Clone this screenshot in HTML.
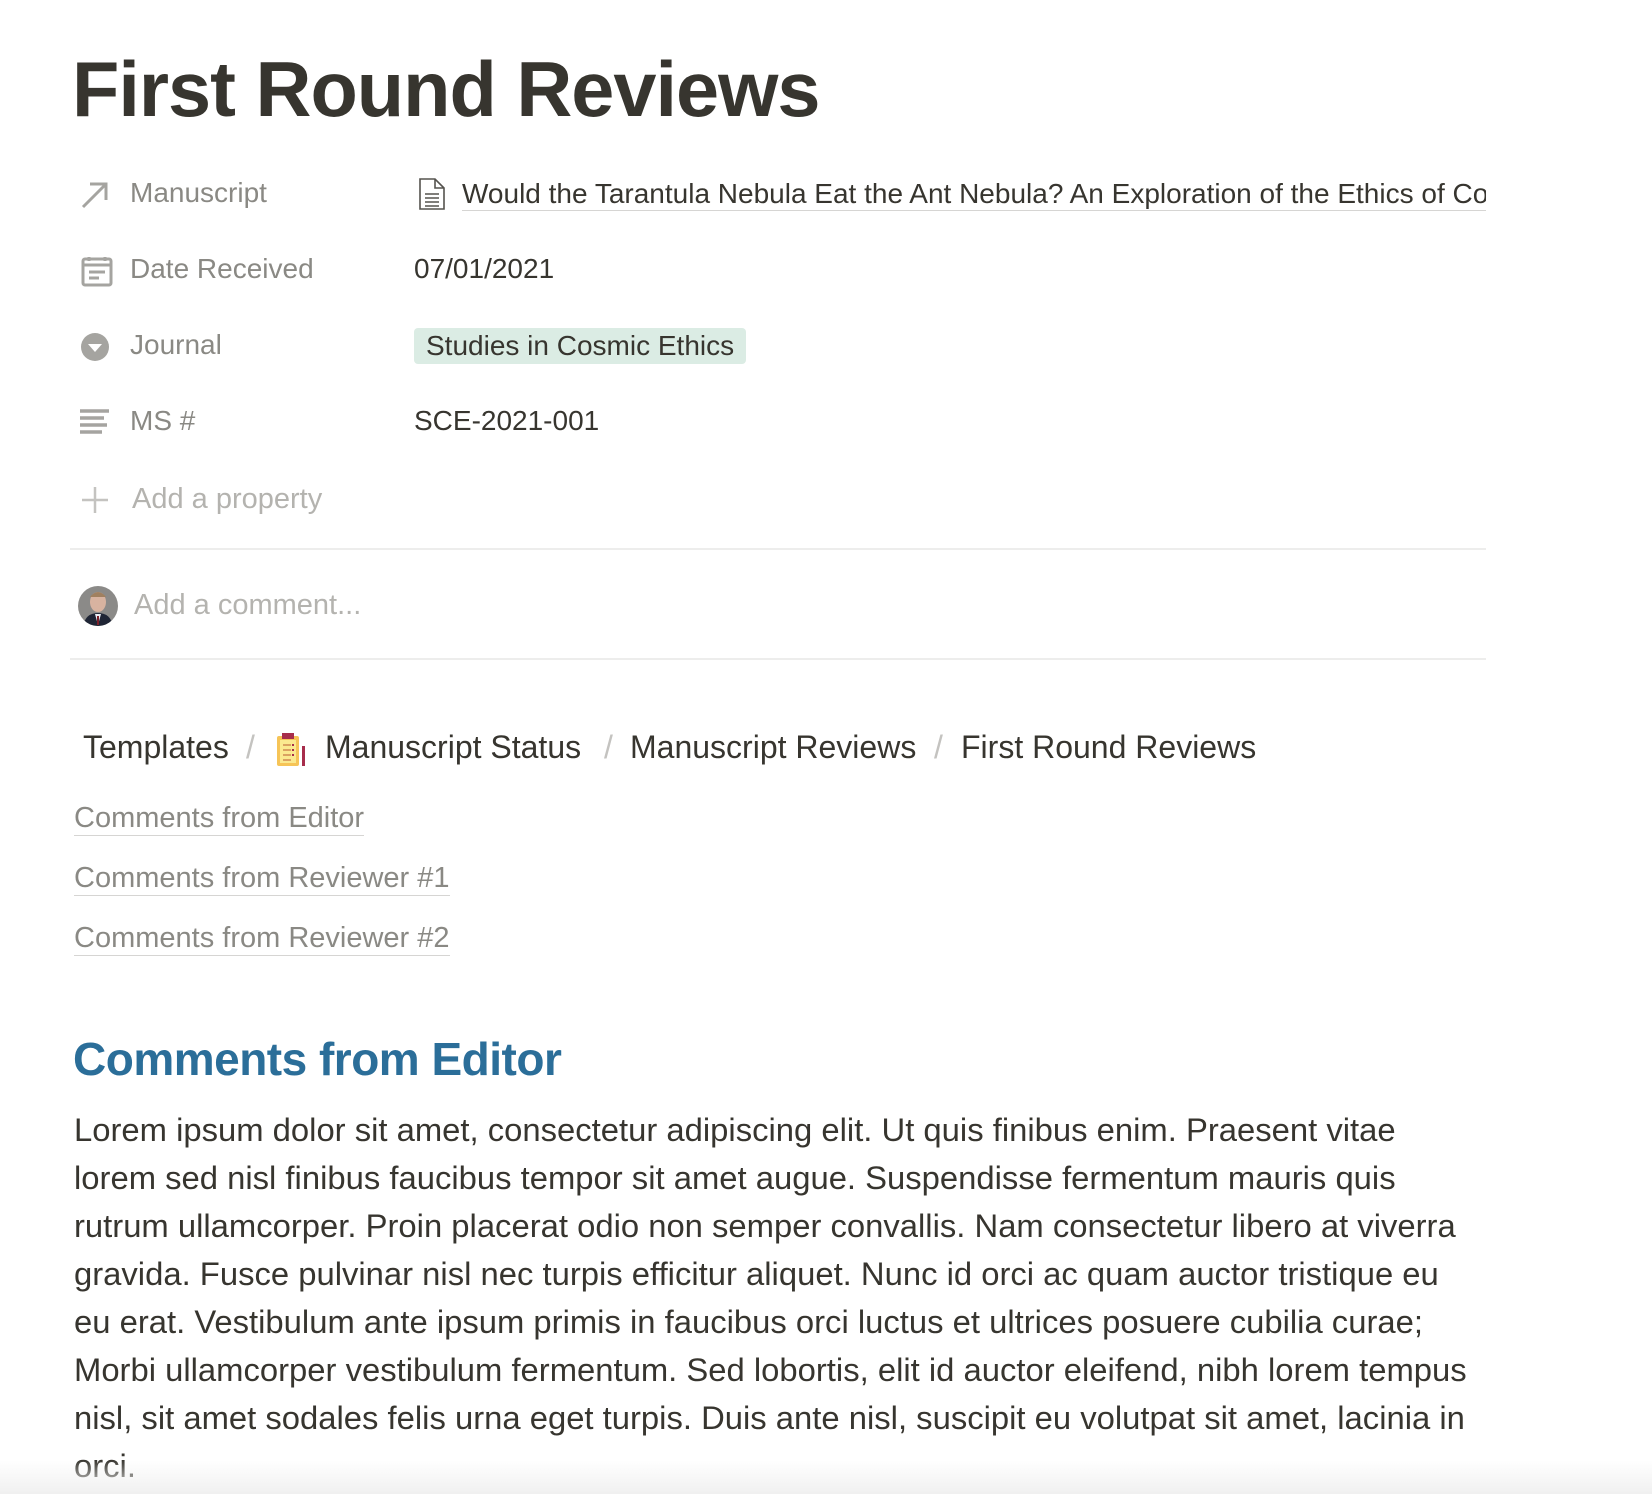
<!DOCTYPE html>
<html><head><meta charset="utf-8"><style>
body{margin:0;width:1652px;height:1494px;background:#fff;position:relative;overflow:hidden;font-family:"Liberation Sans",sans-serif;color:#37352f}
.a{position:absolute;white-space:nowrap}
.lbl{color:#8a8984;font-size:28px;left:130px}
.val{left:414px;font-size:28px;color:#37352f}
.ic{position:absolute;left:80px}
.lnk{left:74px;font-size:29px;color:#8a8984;border-bottom:1px solid #d6d5d3;line-height:34px}
.p{left:74px;font-size:32.8px;line-height:48px}
.bc{font-size:32px;top:729px;color:#37352f}
.sl{color:#c4c3c0}
</style></head><body>
<div class="a" style="left:72px;top:46px;font-size:77.5px;font-weight:bold;letter-spacing:-1px;color:#37352f">First Round Reviews</div>

<svg class="ic" style="top:180px" width="30" height="30" viewBox="0 0 30 30"><path d="M3 27L25 5M10 4H26V20" stroke="#a5a4a0" stroke-width="3" fill="none"/></svg>
<div class="a lbl" style="top:177px">Manuscript</div>
<svg class="a" style="left:418px;top:177px" width="28" height="34" viewBox="0 0 28 34"><path d="M2 2H17L26 11V32H2Z M17 2V11H26 M7 17H21M7 21H21M7 25H21M7 29H21" stroke="#55534e" stroke-width="1.6" fill="none"/></svg>
<div class="a" style="left:462px;top:177px;font-size:28px;color:#37352f;width:1024px;overflow:hidden;border-bottom:1px solid #d6d5d3;line-height:33px;font-weight:500">Would the Tarantula Nebula Eat the Ant Nebula? An Exploration of the Ethics of Cosmic Consumption</div>

<svg class="ic" style="top:254px" width="34" height="34" viewBox="0 0 34 34"><rect x="3" y="5" width="28" height="26" rx="2" stroke="#a5a4a0" stroke-width="3" fill="none"/><path d="M3 11H31M9 3V7M25 3V7M9 18H25M9 24H19" stroke="#a5a4a0" stroke-width="3"/></svg>
<div class="a lbl" style="top:253px">Date Received</div>
<div class="a val" style="top:253px">07/01/2021</div>

<svg class="ic" style="top:332px" width="30" height="30" viewBox="0 0 30 30"><circle cx="15" cy="15" r="14" fill="#a5a4a0"/><path d="M8 12H22L15 20Z" fill="#fff"/></svg>
<div class="a lbl" style="top:329px">Journal</div>
<div class="a" style="left:414px;top:328px;height:36px;padding:0 12px;background:#dbece4;border-radius:4px;font-size:28px;line-height:36px;color:#37352f">Studies in Cosmic Ethics</div>

<svg class="ic" style="top:408px" width="30" height="28" viewBox="0 0 30 28"><path d="M0 3H29M0 10H24M0 17H27M0 24H22" stroke="#a5a4a0" stroke-width="3.5"/></svg>
<div class="a lbl" style="top:405px">MS #</div>
<div class="a val" style="top:405px">SCE-2021-001</div>

<svg class="ic" style="top:485px" width="30" height="30" viewBox="0 0 30 30"><path d="M15 2V28M2 15H28" stroke="#c4c3c0" stroke-width="2.5"/></svg>
<div class="a" style="left:132px;top:483px;font-size:29px;color:#b4b3af">Add a property</div>

<div class="a" style="left:70px;top:548px;width:1416px;height:2px;background:#ededec"></div>
<svg class="a" style="left:77px;top:585px" width="42" height="42" viewBox="0 0 42 42"><defs><clipPath id="c"><circle cx="21" cy="21" r="20"/></clipPath></defs><g clip-path="url(#c)"><rect width="42" height="42" fill="#8b8a88"/><ellipse cx="21" cy="17" rx="8" ry="10" fill="#d8b3a0"/><path d="M13 12Q21 2 29 12" fill="#a08060"/><path d="M6 42Q8 28 21 28Q34 28 36 42Z" fill="#1f2535"/><path d="M18 29L21 40L24 29Z" fill="#e9eef5"/><path d="M20 31H22V40H20Z" fill="#7a1f2a"/></g></svg>
<div class="a" style="left:134px;top:589px;font-size:29px;color:#b4b3af">Add a comment...</div>
<div class="a" style="left:70px;top:658px;width:1416px;height:2px;background:#ededec"></div>

<div class="a bc" style="left:83px">Templates</div>
<div class="a bc sl" style="left:246px">/</div>
<svg class="a" style="left:276px;top:731px" width="32" height="36" viewBox="0 0 32 36"><rect x="1" y="5" width="22" height="30" rx="2" fill="#f6c457"/><rect x="4" y="9" width="16" height="23" fill="#fbe98f"/><rect x="6" y="2" width="12" height="6" fill="#a72d4b"/><path d="M7 14H15M7 19H15M7 24H15M7 29H15" stroke="#d08a52" stroke-width="1.5"/><rect x="16" y="13" width="2" height="2" fill="#a72d4b"/><rect x="16" y="18" width="2" height="2" fill="#a72d4b"/><rect x="16" y="23" width="2" height="2" fill="#a72d4b"/><rect x="26" y="15" width="3" height="20" fill="#a72d4b"/></svg>
<div class="a bc" style="left:325px">Manuscript Status</div>
<div class="a bc sl" style="left:604px">/</div>
<div class="a bc" style="left:630px">Manuscript Reviews</div>
<div class="a bc sl" style="left:934px">/</div>
<div class="a bc" style="left:961px">First Round Reviews</div>

<div class="a lnk" style="top:801px">Comments from Editor</div>
<div class="a lnk" style="top:861px">Comments from Reviewer #1</div>
<div class="a lnk" style="top:921px">Comments from Reviewer #2</div>

<div class="a" style="left:73px;top:1032px;font-size:46px;font-weight:bold;color:#2b6e99;letter-spacing:-0.5px">Comments from Editor</div>
<div class="a p" style="top:1106px">Lorem ipsum dolor sit amet, consectetur adipiscing elit. Ut quis finibus enim. Praesent vitae<br>lorem sed nisl finibus faucibus tempor sit amet augue. Suspendisse fermentum mauris quis<br>rutrum ullamcorper. Proin placerat odio non semper convallis. Nam consectetur libero at viverra<br>gravida. Fusce pulvinar nisl nec turpis efficitur aliquet. Nunc id orci ac quam auctor tristique eu<br>eu erat. Vestibulum ante ipsum primis in faucibus orci luctus et ultrices posuere cubilia curae;<br>Morbi ullamcorper vestibulum fermentum. Sed lobortis, elit id auctor eleifend, nibh lorem tempus<br>nisl, sit amet sodales felis urna eget turpis. Duis ante nisl, suscipit eu volutpat sit amet, lacinia in<br>orci.</div>
<div class="a" style="left:0;top:1460px;width:1652px;height:34px;background:linear-gradient(rgba(240,240,240,0),#f0f0f0)"></div>
</body></html>
